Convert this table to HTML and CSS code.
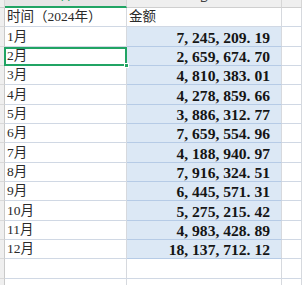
FILE: index.html
```html
<!DOCTYPE html>
<html lang="zh-CN">
<head>
<meta charset="utf-8">
<title>Sheet</title>
<link rel="stylesheet" href="styles.css">
</head>
<body>
<div class="sheet">
  <div class="hd corner"></div>
  <div class="hd sel"><span class="letter">A</span></div>
  <div class="hd"><span class="letter">B</span></div>
  <div class="hd"></div>

  <div class="rh"></div><div class="c t">时间（2024年）</div><div class="c t">金额</div><div class="c"></div>

  <div class="rh"></div><div class="c t">1月</div><div class="c b n">7<i class="p">,</i>245<i class="p">,</i>209<i class="p">.</i>19</div><div class="c"></div>
  <div class="rh"></div><div class="c t active">2月</div><div class="c b n">2<i class="p">,</i>659<i class="p">,</i>674<i class="p">.</i>70</div><div class="c"></div>
  <div class="rh"></div><div class="c t">3月</div><div class="c b n">4<i class="p">,</i>810<i class="p">,</i>383<i class="p">.</i>01</div><div class="c"></div>
  <div class="rh"></div><div class="c t">4月</div><div class="c b n">4<i class="p">,</i>278<i class="p">,</i>859<i class="p">.</i>66</div><div class="c"></div>
  <div class="rh"></div><div class="c t">5月</div><div class="c b n">3<i class="p">,</i>886<i class="p">,</i>312<i class="p">.</i>77</div><div class="c"></div>
  <div class="rh"></div><div class="c t">6月</div><div class="c b n">7<i class="p">,</i>659<i class="p">,</i>554<i class="p">.</i>96</div><div class="c"></div>
  <div class="rh"></div><div class="c t">7月</div><div class="c b n">4<i class="p">,</i>188<i class="p">,</i>940<i class="p">.</i>97</div><div class="c"></div>
  <div class="rh"></div><div class="c t">8月</div><div class="c b n">7<i class="p">,</i>916<i class="p">,</i>324<i class="p">.</i>51</div><div class="c"></div>
  <div class="rh"></div><div class="c t">9月</div><div class="c b n">6<i class="p">,</i>445<i class="p">,</i>571<i class="p">.</i>31</div><div class="c"></div>
  <div class="rh"></div><div class="c t">10月</div><div class="c b n">5<i class="p">,</i>275<i class="p">,</i>215<i class="p">.</i>42</div><div class="c"></div>
  <div class="rh"></div><div class="c t">11月</div><div class="c b n">4<i class="p">,</i>983<i class="p">,</i>428<i class="p">.</i>89</div><div class="c"></div>
  <div class="rh"></div><div class="c t">12月</div><div class="c b n">18<i class="p">,</i>137<i class="p">,</i>712<i class="p">.</i>12</div><div class="c"></div>

  <div class="rh"></div><div class="c"></div><div class="c"></div><div class="c"></div>
  <div class="rh"></div><div class="c"></div><div class="c"></div><div class="c"></div>
</div>
</body>
</html>
```

FILE: styles.css
```css
html, body {
  margin: 0;
  padding: 0;
  background: #ffffff;
  overflow: hidden;
}

.sheet {
  width: 302px;
  height: 285px;
  overflow: hidden;
  display: grid;
  grid-template-columns: 5px 122px 155px 1fr;
  grid-template-rows: 8px repeat(15, 19.333px);
  font-family: "Liberation Serif", "Noto Sans CJK SC", serif;
}

.sheet > div {
  box-sizing: border-box;
  min-width: 0;
}

.hd {
  background: #efefef;
  border-right: 1px solid #d6d6d6;
  border-bottom: 1px solid #cfcfcf;
  display: flex;
  justify-content: center;
  align-items: flex-end;
  overflow: hidden;
}

.hd.sel {
  background: #e6e6e6;
  border-bottom: 2px solid #21a464;
}

.letter {
  font-family: "Liberation Sans", sans-serif;
  font-size: 12px;
  line-height: 12px;
  color: #444;
  margin-bottom: 3px;
}

.hd.sel .letter {
  color: #21a464;
}

.rh {
  background: #efefef;
  border-right: 1px solid #c9c9c9;
  border-bottom: 1px solid #d9d9d9;
}

.c {
  background: #ffffff;
  border-right: 1px solid #d6d9de;
  border-bottom: 1px solid #d0d8e4;
  display: flex;
  align-items: flex-end;
  white-space: nowrap;
  overflow: hidden;
}

.t {
  font-size: 13.5px;
  line-height: 16px;
  color: #2a2a2a;
  padding-left: 2px;
  padding-bottom: 1px;
}

.b {
  background: #dce8f5;
  border-bottom-color: #b6cbe6;
}

.n {
  justify-content: flex-end;
  font-size: 15.6px;
  line-height: 16px;
  font-weight: bold;
  color: #151515;
  padding-right: 11px;
}

.p {
  font-style: normal;
  display: inline-block;
  width: 0.5em;
}

.active {
  position: relative;
  overflow: visible;
}

.active::after {
  content: "";
  position: absolute;
  left: -1px;
  top: 0;
  right: -1px;
  bottom: -1px;
  border: 2px solid #21a464;
  pointer-events: none;
}

.active::before {
  content: "";
  position: absolute;
  right: -3px;
  bottom: -3px;
  width: 5px;
  height: 5px;
  background: #21a464;
  border: 1px solid #ffffff;
  box-sizing: border-box;
  z-index: 1;
}
```
